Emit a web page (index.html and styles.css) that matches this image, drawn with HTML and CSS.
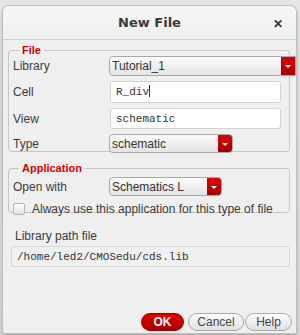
FILE: index.html
```html
<!DOCTYPE html>
<html>
<head>
  <title>New File</title>
  <link rel="stylesheet" href="styles.css">
</head>
<body>
  <div class="desktop">
    <div class="dialog">
      <div class="titlebar">
        <span class="title">New File</span>
        <span class="close">&#x2715;</span>
      </div>

      <div class="content">
        <fieldset class="group file-group">
          <legend>File</legend>
          <div class="form-grid">
            <span class="label">Library</span>
            <div class="combo combo-wide">
              <span class="combo-text">Tutorial_1</span>
              <span class="combo-btn"></span>
            </div>

            <span class="label">Cell</span>
            <div class="text-field field-cell">R_div<span class="caret"></span></div>

            <span class="label">View</span>
            <div class="text-field field-view">schematic</div>

            <span class="label">Type</span>
            <div class="combo combo-type">
              <span class="combo-text">schematic</span>
              <span class="combo-btn"></span>
            </div>
          </div>
        </fieldset>

        <fieldset class="group app-group">
          <legend>Application</legend>
          <div class="form-grid">
            <span class="label">Open with</span>
            <div class="combo combo-app">
              <span class="combo-text">Schematics L</span>
              <span class="combo-btn"></span>
            </div>
          </div>
          <label class="check-row">
            <span class="checkbox"></span>
            <span>Always use this application for this type of file</span>
          </label>
        </fieldset>

        <div class="path-block">
          <span class="label">Library path file</span>
          <div class="text-field path-field">/home/led2/CMOSedu/cds.lib</div>
        </div>

        <div class="buttons">
          <button class="btn btn-ok">OK</button>
          <button class="btn btn-cancel">Cancel</button>
          <button class="btn btn-help">Help</button>
        </div>
      </div>
    </div>
  </div>
</body>
</html>
```

FILE: styles.css
```css
:root {
  --bg: #efefef;
  --border: #c6c6c6;
  --red: #d40000;
  --text: #3c3c3c;
  --sans: 'Liberation Sans', Arial, sans-serif;
  --mono: 'Liberation Mono', 'Courier New', monospace;
}

* {
  margin: 0;
  padding: 0;
  box-sizing: border-box;
}

body {
  width: 300px;
  height: 335px;
  overflow: hidden;
  background-color: #d4d4d4;
  font-family: var(--sans);
  font-size: 12px;
  color: var(--text);
}

.desktop {
  padding: 6px 4px 0 3px;
  height: 335px;
  background: linear-gradient(#e6e6e6, #dadada);
}

.dialog {
  height: 327px;
  background-color: var(--bg);
  border-radius: 6px 6px 0 0;
  box-shadow: 0 0 0 1px #bdbdbd, 0 2px 4px rgba(0, 0, 0, 0.35);
  display: flex;
  flex-direction: column;
}

.titlebar {
  height: 34px;
  display: flex;
  align-items: center;
  justify-content: center;
  position: relative;
  background: linear-gradient(#f6f6f6, #efefef);
  border-bottom: 1px solid #cfcfcf;
  border-radius: 6px 6px 0 0;
}

.title {
  font-family: 'DejaVu Sans', var(--sans);
  font-weight: 700;
  font-size: 13px;
  color: #3a3a3a;
}

.close {
  position: absolute;
  right: 13px;
  top: 11px;
  font-size: 12px;
  font-weight: 700;
  color: #333;
}

.content {
  flex: 1;
  display: flex;
  flex-direction: column;
  padding: 4px 6px 2px 5px;
}

.group {
  border: 1px solid var(--border);
  border-radius: 4px;
  padding: 0 4px 4px 4px;
}

.group legend {
  margin-left: 6px;
  padding: 0 3px;
  color: var(--red);
  font-weight: 700;
  font-size: 11px;
  line-height: 12px;
}

.file-group {
  height: 108px;
}

.app-group {
  margin-top: 10px;
  height: 51px;
}

.app-group .form-grid {
  padding-top: 3px;
}

.form-grid {
  display: grid;
  grid-template-columns: 96px 1fr;
  align-items: center;
  row-gap: 5px;
}

.label {
  font-size: 12px;
  color: var(--text);
}

.combo {
  display: flex;
  align-items: stretch;
  height: 20px;
  border: 1px solid #a9a9a9;
  border-radius: 4px;
  background: linear-gradient(#fbfbfb, #e4e4e4);
  overflow: hidden;
}

.combo-text {
  flex: 1;
  padding-left: 2px;
  line-height: 18px;
  color: #333;
}

.combo-btn {
  width: 14px;
  background: linear-gradient(#e00000, #a00000);
  position: relative;
}

.combo-btn::after {
  content: "";
  position: absolute;
  left: 4px;
  top: 8px;
  border-left: 3px solid transparent;
  border-right: 3px solid transparent;
  border-top: 3px solid #fff;
}

.combo-wide {
  margin-right: -11px;
  border-radius: 4px 0 0 4px;
}

.combo-type {
  width: 124px;
  height: 19px;
}

.combo-app {
  width: 113px;
  height: 19px;
}

.text-field {
  height: 22px;
  background-color: #fff;
  border: 1px solid #d2d2d2;
  border-radius: 3px;
  font-family: var(--mono);
  font-size: 11px;
  line-height: 20px;
  padding-left: 5px;
  color: #333;
}

.field-cell,
.field-view {
  width: 171px;
  margin-left: 1px;
}

.field-view {
  height: 21px;
}

.caret {
  display: inline-block;
  width: 1px;
  height: 12px;
  background-color: #333;
  vertical-align: -2px;
}

.check-row {
  display: flex;
  align-items: center;
  gap: 7px;
  margin-top: 6px;
  font-size: 12px;
  color: var(--text);
}

.checkbox {
  width: 12px;
  height: 12px;
  border: 1px solid #b5b5b5;
  border-radius: 2px;
  background: linear-gradient(#ffffff, #e2e2e2);
}

.path-block {
  margin-top: 16px;
  padding-left: 3px;
  display: flex;
  flex-direction: column;
  gap: 3px;
}

.path-block .label {
  padding-left: 4px;
}

.path-field {
  width: 279px;
  height: 21px;
  background-color: #f0f0f0;
  border-color: #d6d6d6;
}

.buttons {
  margin-top: auto;
  margin-right: -2px;
  display: flex;
  justify-content: flex-end;
  gap: 1px;
}

.btn {
  height: 18px;
  border: 1px solid #aaa;
  border-radius: 9px;
  background: linear-gradient(#fdfdfd, #e0e0e0);
  font-family: var(--sans);
  font-size: 12px;
  color: #444;
}

.btn-ok {
  width: 43px;
  margin-right: 3px;
  background: linear-gradient(#e40000, #a60000);
  border-color: #900;
  color: #fff;
  font-weight: 700;
}

.btn-cancel {
  width: 56px;
}

.btn-help {
  width: 47px;
}
```
